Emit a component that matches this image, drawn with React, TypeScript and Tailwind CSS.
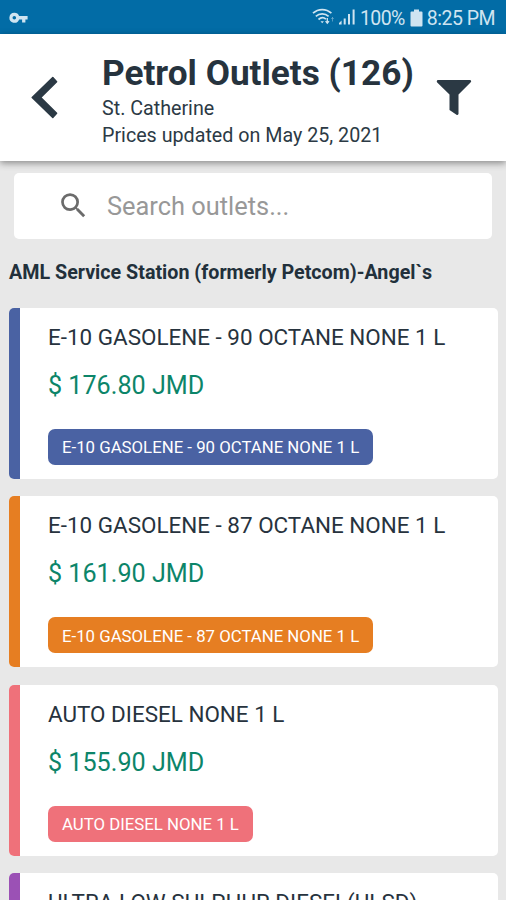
type Outlet = {
  name: string;
  price: string;
  accent: string;
};

const fuels: Outlet[] = [
  { name: "E-10 GASOLENE - 90 OCTANE NONE 1 L", price: "$ 176.80 JMD", accent: "bg-[#4a62a3]" },
  { name: "E-10 GASOLENE - 87 OCTANE NONE 1 L", price: "$ 161.90 JMD", accent: "bg-[#e67e22]" },
  { name: "AUTO DIESEL NONE 1 L", price: "$ 155.90 JMD", accent: "bg-[#ef717a]" },
  { name: "ULTRA LOW SULPHUR DIESEL(ULSD)", price: "$ 160.50 JMD", accent: "bg-[#9b51b5]" },
];

function StatusBar() {
  return (
    <div className="flex h-[34px] shrink-0 items-center bg-[#026ca6] pr-[11px] pl-[9px] text-[#cfe4f1]">
      <svg className="mt-px h-[12px] w-[20px]" viewBox="0 0 20 12" fill="currentColor">
        <path
          fillRule="evenodd"
          d="M5.3 0.8a5 5 0 1 0 4.8 6.7h3v3h3.3v-3h2.2V4H10.1A5 5 0 0 0 5.3.8Zm0 3.2a1.8 1.8 0 1 1 0 3.6 1.8 1.8 0 0 1 0-3.6Z"
        />
      </svg>
      <svg className="ml-auto h-[18px] w-[23px]" viewBox="0 0 23 18" fill="none" stroke="currentColor" strokeWidth="1.7">
        <path d="M1 5.2C6.200 .3 14.200 .3 19.400 5.200" />
        <path d="M3.800 8.400c3.600-3.400 9.200-3.400 12.800 0" />
        <path d="M6.500 11.500c2.300-2.100 5.300-2.200 7.400-.4" />
        <path d="M8.500 13.200l1.700 2 1.700-2z" fill="currentColor" stroke="none" />
        <path d="M15.300 10v5M13.600 13.200l1.700 2 1.700-2" strokeWidth="1.300" />
        <path d="M20.500 13.500v-4M19.300 11l1.200-1.500 1.200 1.500" strokeWidth=".8" opacity=".5" />
      </svg>
      <svg className="ml-[3px] h-[18px] w-[18px]" viewBox="0 0 18 18" fill="currentColor">
        <path d="M1 16.500v-1.500l2.600-2.500v4zM5.700 10.500h2v6h-2zM10 6h2v10.500h-2zM14.600 1.500h2v15h-2z" />
      </svg>
      <span className="mt-[3px] ml-[4px] text-[19.500px] leading-none tracking-[-0.600px]">100%</span>
      <svg className="mt-px mr-[4px] ml-[5px] h-[18px] w-[13px]" viewBox="0 0 13 18" fill="currentColor">
        <path d="M4 0.500h5v2h2.500q1 0 1 1v13q0 1-1 1h-10q-1 0-1-1v-13q0-1 1-1H4z" />
      </svg>
      <span className="mt-[3px] text-[19.500px] leading-none tracking-[-0.500px]">8:25 PM</span>
    </div>
  );
}

function Header() {
  return (
    <header className="relative z-10 flex h-[127px] shrink-0 items-start bg-white shadow-[0_2px_7px_rgba(0,0,0,0.42)]">
      <svg
        className="mt-[42px] ml-[31px] h-[43px] w-[27px] shrink-0"
        viewBox="0 0 27 43"
        fill="#2b3944"
        stroke="#2b3944"
        strokeWidth="1.500"
        strokeLinejoin="round"
      >
        <path d="M21.800 1.600L1.200 21.500 21.800 41.400 25.600 37.300 9.700 21.500 25.600 5.700z" />
      </svg>
      <div className="ml-[44px] flex flex-col whitespace-nowrap text-[#2c3a45]">
        <h1 className="mt-[17px] text-[35.200px] leading-[44px] font-bold text-[#26333e]">Petrol Outlets (126)</h1>
        <p className="text-[19.700px] leading-[27px]">St. Catherine</p>
        <p className="text-[19.700px] leading-[27px]">Prices updated on May 25, 2021</p>
      </div>
      <svg className="mt-[45px] ml-auto mr-[34px] h-[37px] w-[36px] shrink-0" viewBox="0 0 36 37" fill="#2b3944">
        <path d="M1.500 1h33q1.500 1.500 0 2.500L22.500 15.500v19.500q-.8 1.500-2 .7L13.500 31V15.500L1.200 3.500Q0 2 1.500 1z" />
      </svg>
    </header>
  );
}

function SearchBox() {
  return (
    <div className="mx-[14px] mt-[12px] flex h-[66px] shrink-0 items-center rounded-[5px] bg-white">
      <svg className="ml-[43px] h-[33px] w-[33px] -translate-y-px" viewBox="0 0 24 24" fill="#6b6b6b">
        <path d="M15.500 14h-.79l-.28-.27A6.471 6.471 0 0 0 16 9.500 6.500 6.500 0 1 0 9.500 16c1.610 0 3.090-.59 4.230-1.570l.27.280v.79l5 4.990L20.490 19l-4.990-5zm-6 0C7.010 14 5 11.990 5 9.500S7.010 5 9.500 5 14 7.010 14 9.500 11.990 14 9.500 14z" />
      </svg>
      <span className="mt-[2px] ml-[17px] text-[25.400px] leading-none text-[#989898]">Search outlets...</span>
    </div>
  );
}

function FuelCard({ name, price, accent }: Outlet) {
  return (
    <article className="mb-[17.400px] flex h-[171px] shrink-0 overflow-hidden rounded-[5px] bg-white whitespace-nowrap">
      <div className={`w-[11px] shrink-0 ${accent}`} />
      <div className="ml-[28px] flex flex-col items-start">
        <h3 className="mt-[14px] text-[22.450px] leading-[30px] text-[#27333e]">{name}</h3>
        <p className="mt-[18px] text-[25.150px] leading-[32px] text-[#0c8569]">{price}</p>
        <span className={`mt-[27px] flex h-[36px] items-center rounded-[7px] px-[14px] pt-[2px] text-[16.800px] text-white ${accent}`}>
          {name}
        </span>
      </div>
    </article>
  );
}

export default function App() {
  return (
    <div className="flex h-[900px] w-[506px] flex-col overflow-hidden bg-[#e8e8e8] font-[Roboto,sans-serif]">
      <StatusBar />
      <Header />
      <SearchBox />
      <h2 className="mt-[20px] ml-[9px] text-[19.700px] leading-[28px] font-bold whitespace-nowrap text-[#22303b]">
        AML Service Station (formerly Petcom)-Angel`s
      </h2>
      <main className="mt-[21px] mr-[8px] ml-[9px] flex flex-col">
        {fuels.map((fuel) => (
          <FuelCard key={fuel.name} {...fuel} />
        ))}
      </main>
    </div>
  );
}
